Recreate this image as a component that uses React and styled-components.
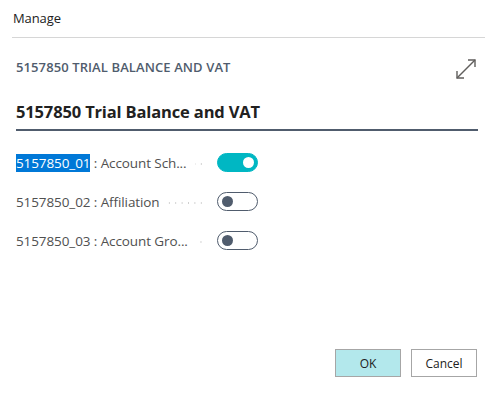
import React, { useState } from 'react';
import styled, { createGlobalStyle } from 'styled-components';

const GlobalStyle = createGlobalStyle`
  html, body {
    margin: 0;
    padding: 0;
    background: #ffffff;
  }
  body {
    font-family: "Open Sans", "Noto Sans", sans-serif;
    color: #212121;
  }
`;

const Dialog = styled.div`
  width: 497px;
  height: 397px;
  display: flex;
  flex-direction: column;
  box-sizing: border-box;
`;

const Header = styled.div`
  margin: 0 12px 0 12px;
  padding: 9px 0 0 1px;
  height: 38px;
  box-sizing: border-box;
  border-bottom: 1px solid #d6d6d6;
  font-size: 13px;
  line-height: 18px;
  color: #212121;
  letter-spacing: -0.1px;
`;

const Body = styled.div`
  flex: 1;
  padding: 19px 16px 0 16px;
  display: flex;
  flex-direction: column;
`;

const CaptionRow = styled.div`
  display: flex;
  justify-content: space-between;
  align-items: flex-start;
`;

const Caption = styled.div`
  font-size: 13px;
  font-weight: 600;
  color: #505c6d;
  text-transform: uppercase;
  letter-spacing: 0.1px;
  line-height: 20px;
`;

const ExpandButton = styled.button`
  border: none;
  background: none;
  padding: 0;
  margin: 0 3px 0 0;
  width: 24px;
  height: 24px;
  color: #605e5c;
  cursor: pointer;
`;

const Title = styled.h2`
  margin: 19px 3px 0 0;
  padding-bottom: 5px;
  font-size: 16.5px;
  font-weight: 700;
  color: #212121;
  letter-spacing: -0.15px;
  border-bottom: 2px solid #505c6d;
  line-height: 24px;
`;

const List = styled.div`
  margin-top: 22px;
  display: flex;
  flex-direction: column;
  gap: 20px;
`;

const Row = styled.div`
  display: flex;
  align-items: center;
  height: 19px;
`;

const Label = styled.div`
  width: 188px;
  display: flex;
  align-items: center;
  font-size: 13.5px;
  color: #505050;
  letter-spacing: -0.1px;
`;

const LabelText = styled.span`
  white-space: nowrap;
  flex-shrink: 0;
`;

const Selected = styled.span`
  background: #0078d7;
  color: #ffffff;
`;

const Leader = styled.span`
  flex: 1;
  margin: 3px 0 0 8px;
  height: 2px;
  background-image: radial-gradient(circle, #cfcfcf 0.7px, transparent 1px);
  background-size: 6.4px 2px;
  background-position: right center;
  background-repeat: repeat-x;
`;

const Switch = styled.button`
  margin-left: 13px;
  width: 41px;
  height: 19px;
  box-sizing: border-box;
  border-radius: 10px;
  border: 1.5px solid ${(p) => (p.$on ? '#00b7c3' : '#505c6d')};
  background: ${(p) => (p.$on ? '#00b7c3' : '#ffffff')};
  padding: 0 3px;
  display: flex;
  align-items: center;
  justify-content: ${(p) => (p.$on ? 'flex-end' : 'flex-start')};
  cursor: pointer;
`;

const Knob = styled.span`
  width: 11px;
  height: 11px;
  border-radius: 50%;
  background: ${(p) => (p.$on ? '#ffffff' : '#505c6d')};
  margin: ${(p) => (p.$on ? '0' : '0 0 0 1px')};
`;

const Footer = styled.div`
  display: flex;
  justify-content: flex-end;
  gap: 10px;
  padding: 0 20px 20px 0;
`;

const Button = styled.button`
  width: 66px;
  height: 28px;
  box-sizing: border-box;
  border: 1px solid #a6a6a6;
  background: ${(p) => (p.$primary ? '#b3e8ec' : '#ffffff')};
  font-family: "Open Sans", "Noto Sans", sans-serif;
  font-size: 12px;
  color: #212121;
  cursor: pointer;
`;

const items = [
  { id: '5157850_01', name: 'Account Sch...', full: 'Account Schedule', on: true, selected: true },
  { id: '5157850_02', name: 'Affiliation', full: 'Affiliation', on: false },
  { id: '5157850_03', name: 'Account Gro...', full: 'Account Groups', on: false },
];

function ExpandIcon() {
  return (
    <svg width="24" height="24" viewBox="0 0 24 24" fill="none" stroke="currentColor" strokeWidth="1.4">
      <path d="M3 21 L21 3" />
      <path d="M14 3 H21 V10" />
      <path d="M3 14 V21 H10" />
    </svg>
  );
}

export default function App() {
  const [state, setState] = useState(items.map((i) => i.on));
  return (
    <Dialog>
      <GlobalStyle />
      <Header>Manage</Header>
      <Body>
        <CaptionRow>
          <Caption>5157850 Trial Balance and VAT</Caption>
          <ExpandButton aria-label="Expand">
            <ExpandIcon />
          </ExpandButton>
        </CaptionRow>
        <Title>5157850 Trial Balance and VAT</Title>
        <List>
          {items.map((item, i) => (
            <Row key={item.id}>
              <Label title={`${item.id} : ${item.full}`}>
                <LabelText>
                  {item.selected ? <Selected>{item.id}</Selected> : item.id} : {item.name}
                </LabelText>
                <Leader />
              </Label>
              <Switch
                $on={state[i]}
                onClick={() => setState(state.map((s, j) => (j === i ? !s : s)))}
              >
                <Knob $on={state[i]} />
              </Switch>
            </Row>
          ))}
        </List>
      </Body>
      <Footer>
        <Button $primary>OK</Button>
        <Button>Cancel</Button>
      </Footer>
    </Dialog>
  );
}
